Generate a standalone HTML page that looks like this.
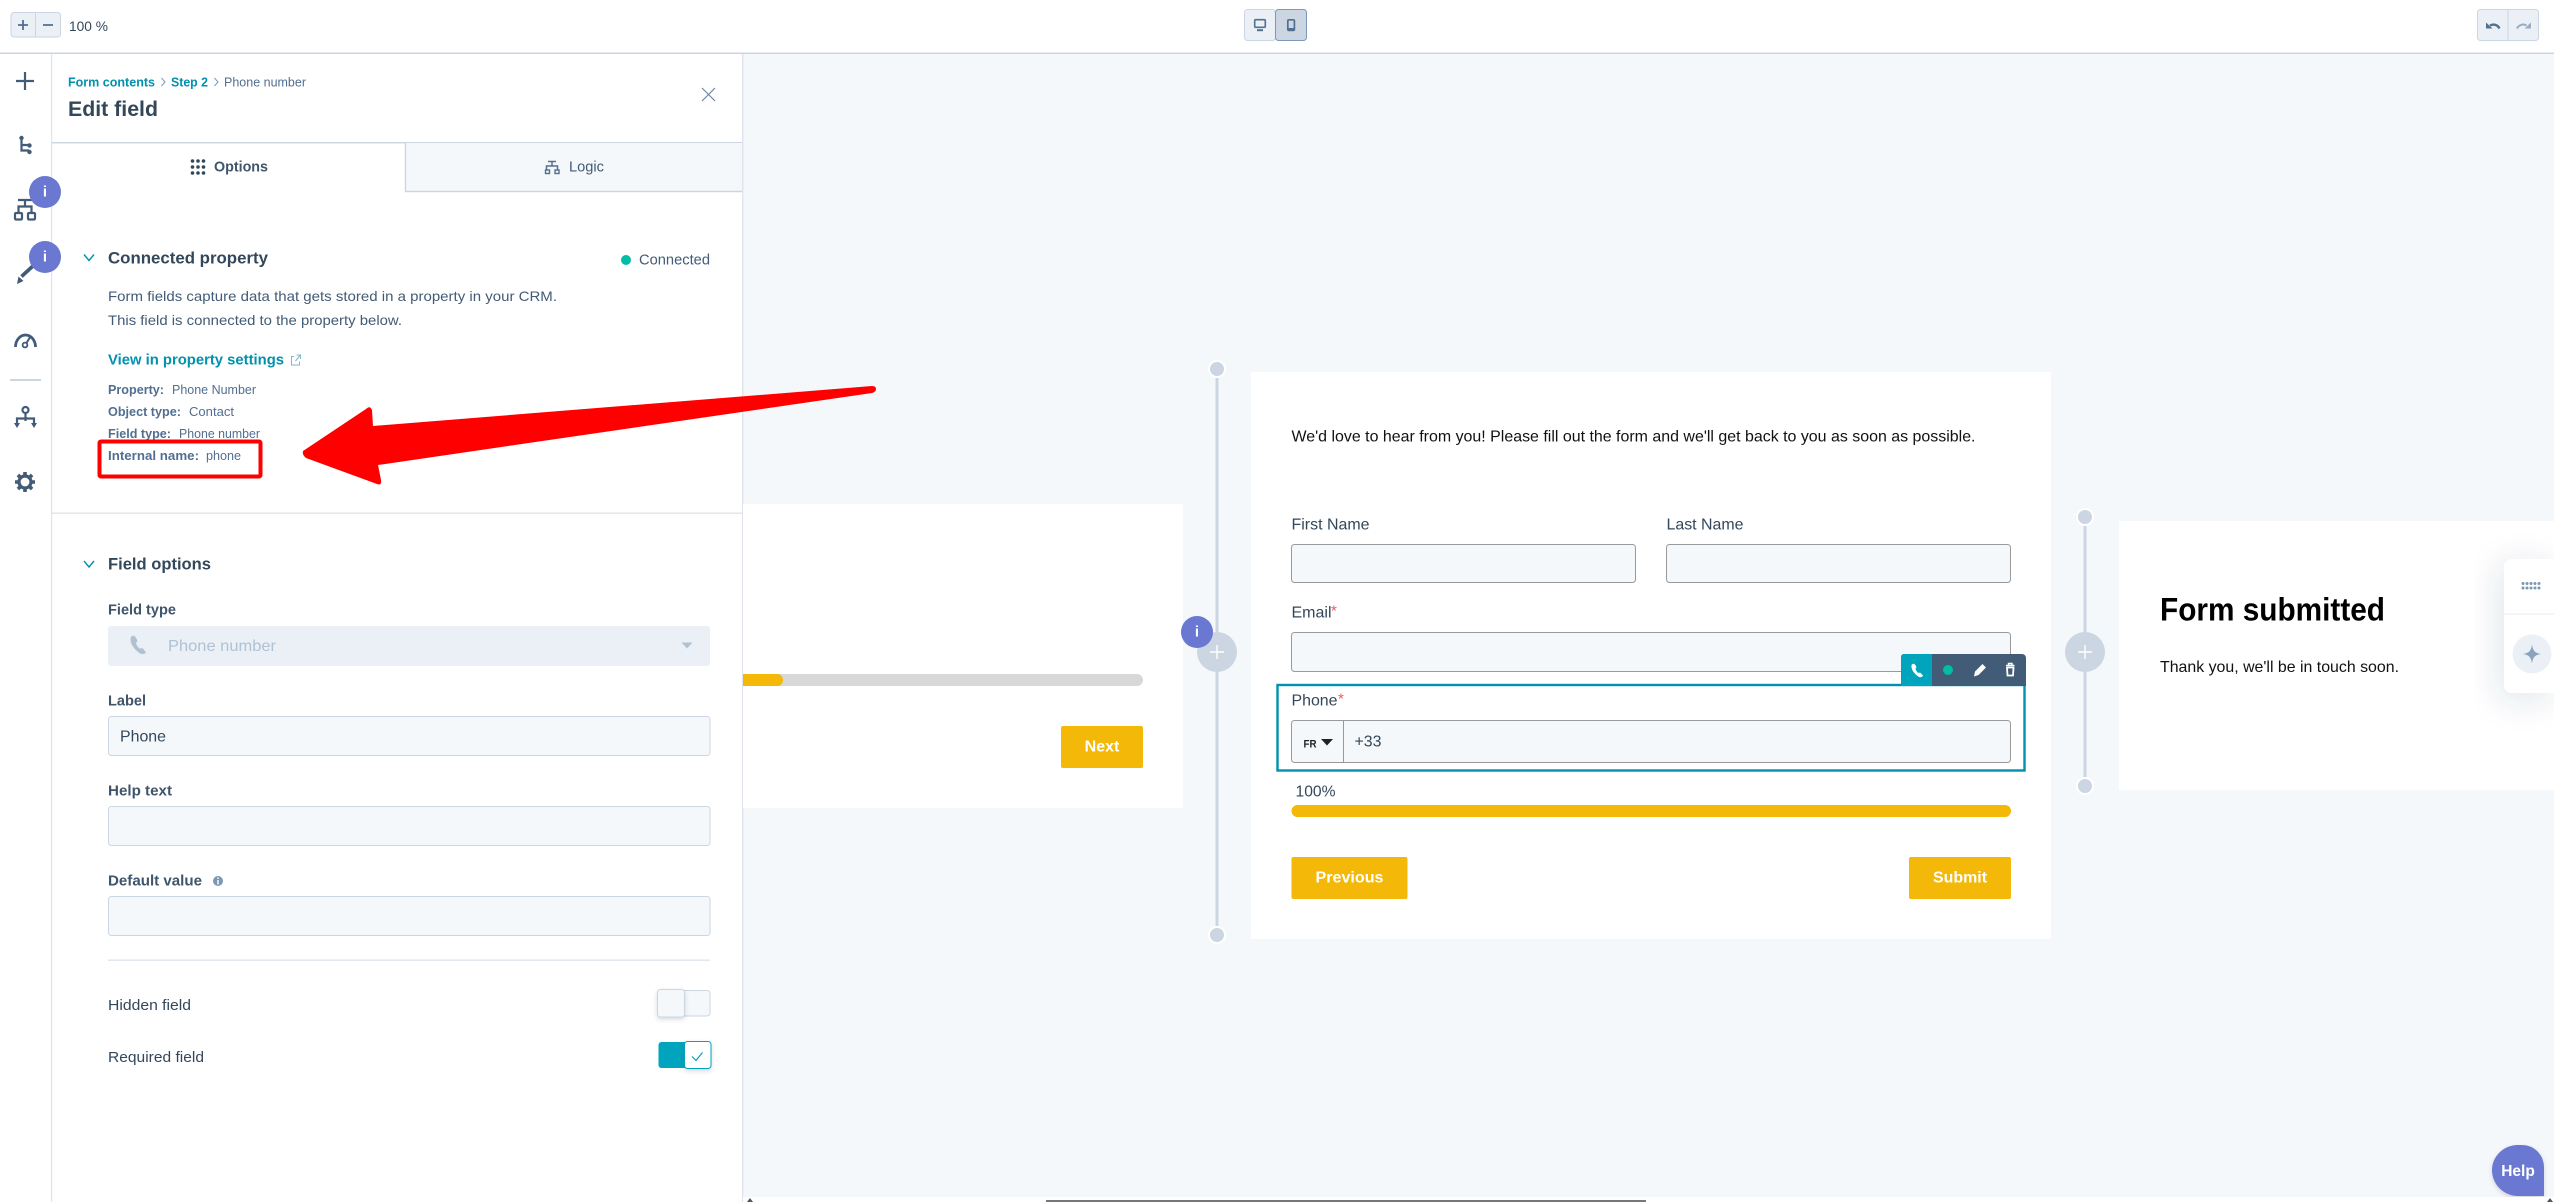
<!DOCTYPE html>
<html><head><meta charset="utf-8"><title>Edit field</title>
<style>
html,body{margin:0;padding:0;background:#fff;width:2554px;height:1202px;overflow:hidden}
svg{display:block}
text{font-family:"Liberation Sans",Arial,sans-serif;dominant-baseline:central;transform:translateY(1.2px)}
.d{fill:#33475b}
.l{fill:#3f556c}
.b{font-weight:700}
.g{fill:#516f90}
.t{fill:#0091ae}
.f{fill:#222;font-size:16px}
.inp{fill:#f5f8fa;stroke:#cbd6e2;stroke-width:1}
.fi{fill:#f5f8fa;stroke:#999;stroke-width:1}
.ic{fill:none;stroke:#425b76;stroke-width:2.2}
</style></head><body>
<svg width="2554" height="1202" viewBox="0 0 2554 1202" xmlns="http://www.w3.org/2000/svg">
<defs>
<filter id="s1" x="-60%" y="-40%" width="200%" height="180%"><feDropShadow dx="-4" dy="6" stdDeviation="16" flood-color="#33475b" flood-opacity=".14"/></filter>
<filter id="s2" x="-40%" y="-40%" width="180%" height="200%"><feDropShadow dx="0" dy="2" stdDeviation="2" flood-color="#33475b" flood-opacity=".2"/></filter>
</defs>
<rect width="2554" height="1202" fill="#fff"/>
<!-- canvas -->
<rect x="743" y="54" width="1811" height="1143" fill="#f5f8fa"/>
<!-- top toolbar -->
<rect x="0" y="52.5" width="2554" height="1.5" fill="#cbd6e2"/>
<rect x="11" y="12.5" width="49.5" height="24.5" rx="3" fill="#eaf0f6" stroke="#cbd6e2" stroke-width="1"/>
<path d="M35.5 13V37" stroke="#cbd6e2"/>
<path d="M18 25H28M23 20V30M43 25H53" stroke="#516f90" stroke-width="1.8" fill="none"/>
<text x="69" y="25" font-size="14" fill="#33475b" textLength="39" lengthAdjust="spacingAndGlyphs">100 %</text>
<rect x="1244.5" y="9.5" width="31" height="31" rx="3" fill="#eaf0f6" stroke="#cbd6e2"/>
<rect x="1275.5" y="9.5" width="31" height="31" rx="3" fill="#cbd6e2" stroke="#7c98b6"/>
<rect x="1254.7" y="19.7" width="10.6" height="7.6" rx="1" fill="#eaf0f6" stroke="#516f90" stroke-width="1.6"/>
<path d="M1257 30.2H1263" stroke="#516f90" stroke-width="2"/>
<rect x="1287.8" y="19.8" width="6.6" height="10.6" rx="1.2" fill="#cbd6e2" stroke="#516f90" stroke-width="1.7"/>
<path d="M1288 28.8H1294" stroke="#516f90" stroke-width="1.6"/>
<rect x="2477.5" y="9.5" width="61" height="31" rx="3" fill="#eaf0f6" stroke="#cbd6e2"/>
<path d="M2508 10V40" stroke="#cbd6e2"/>
<path d="M2499.5 28.5C2497.5 24.5 2493 23.6 2490 25.6" fill="none" stroke="#516f90" stroke-width="2.4"/>
<path d="M2486 22.5V28.5H2492.5Z" fill="#516f90"/>
<path d="M2517 28.5C2519 24.5 2523.5 23.6 2526.5 25.6" fill="none" stroke="#99acc2" stroke-width="2"/>
<path d="M2531 22.5V28.5H2524.5Z" fill="#99acc2"/>

<!-- rail -->
<rect x="51" y="54" width="1.2" height="1148" fill="#dfe3eb"/>
<path d="M25 72V90M16 81H34" stroke="#425b76" stroke-width="2.2" fill="none"/>
<path d="M21.5 138V150.5H29M21.5 145H29" class="ic" stroke-width="1.8"/>
<circle cx="21.5" cy="138" r="2.2" fill="#425b76"/><circle cx="29.5" cy="145.5" r="2.2" fill="#425b76"/><circle cx="29.5" cy="152" r="2.2" fill="#425b76"/>
<path d="M18 200H32M25 200V206M18.5 213V206.5H31.5V213" class="ic"/>
<rect x="15" y="213" width="7" height="6.5" rx="1" class="ic"/><rect x="28" y="213" width="7" height="6.5" rx="1" class="ic"/>
<path d="M21.5 276.5L34 265" stroke="#425b76" stroke-width="3.6"/>
<path d="M17 284L18.5 276.5L23.5 281Z" fill="#425b76"/>
<path d="M15.5 347A10 12 0 0 1 35.5 347" fill="none" stroke="#425b76" stroke-width="2.8"/>
<circle cx="25" cy="345" r="2.4" fill="none" stroke="#425b76" stroke-width="1.8"/><path d="M26.5 343L31 335.5" stroke="#425b76" stroke-width="2"/>
<rect x="10" y="379" width="31" height="2" fill="#cbd6e2"/>
<circle cx="25.5" cy="410" r="3" class="ic" stroke-width="2"/>
<path d="M25.5 413V418M17 425V418.5H34V425M25.5 418V421" class="ic" stroke-width="2"/>
<path d="M14 423H20L17 428ZM31 423H37L34 428Z" fill="#425b76"/>
<g transform="translate(25 482)"><circle r="6" fill="none" stroke="#425b76" stroke-width="3.2"/>
<path d="M-1.8 -10H1.8V-6H-1.8ZM-1.8 6H1.8V10H-1.8ZM-10 -1.8H-6V1.8H-10ZM6 -1.8H10V1.8H6Z" fill="#425b76"/>
<path d="M-1.8 -10H1.8V-6H-1.8ZM-1.8 6H1.8V10H-1.8ZM-10 -1.8H-6V1.8H-10ZM6 -1.8H10V1.8H6Z" fill="#425b76" transform="rotate(45)"/></g>
<circle cx="45" cy="192" r="16" fill="#6a78d1"/><text x="45" y="191" font-size="15" font-weight="700" fill="#fff" text-anchor="middle">i</text>
<circle cx="45" cy="257" r="16" fill="#6a78d1"/><text x="45" y="256" font-size="15" font-weight="700" fill="#fff" text-anchor="middle">i</text>

<!-- panel -->
<rect x="742" y="54" width="1.4" height="1148" fill="#dfe3eb"/>
<text x="68" y="81" font-size="13" class="t b" textLength="87" lengthAdjust="spacingAndGlyphs">Form contents</text>
<path d="M161.5 78L165 82L161.5 86" fill="none" stroke="#7c98b6" stroke-width="1"/>
<text x="171" y="81" font-size="13" class="t b" textLength="37" lengthAdjust="spacingAndGlyphs">Step 2</text>
<path d="M214.5 78L218 82L214.5 86" fill="none" stroke="#7c98b6" stroke-width="1"/>
<text x="224" y="81" font-size="13" class="g" textLength="82" lengthAdjust="spacingAndGlyphs">Phone number</text>
<text x="68" y="108.5" font-size="21" class="d b" textLength="90" lengthAdjust="spacingAndGlyphs">Edit field</text>
<path d="M702 88L715 101M715 88L702 101" stroke="#6b86a5" stroke-width="1.2" fill="none"/>
<rect x="52" y="142" width="690" height="1.4" fill="#cbd6e2"/>
<rect x="405.5" y="143" width="336.5" height="48.5" fill="#f5f8fa"/>
<path d="M405.5 143V191.5H742" fill="none" stroke="#cbd6e2" stroke-width="1.4"/>
<g fill="#33475b"><circle cx="192.5" cy="161" r="1.8"/><circle cx="198" cy="161" r="1.8"/><circle cx="203.5" cy="161" r="1.8"/><circle cx="192.5" cy="167" r="1.8"/><circle cx="198" cy="167" r="1.8"/><circle cx="203.5" cy="167" r="1.8"/><circle cx="192.5" cy="173" r="1.8"/><circle cx="198" cy="173" r="1.8"/><circle cx="203.5" cy="173" r="1.8"/></g>
<text x="214" y="166" font-size="15" class="l" font-weight="700" textLength="54" lengthAdjust="spacingAndGlyphs">Options</text>
<path d="M548 161.5H556M552 161.5V166M546.5 170V166H557.5V170" fill="none" stroke="#516f90" stroke-width="1.5"/>
<rect x="545.5" y="170" width="4" height="3.5" fill="none" stroke="#516f90" stroke-width="1.4"/><rect x="555" y="170" width="4" height="3.5" fill="none" stroke="#516f90" stroke-width="1.4"/>
<text x="569" y="166" font-size="15" fill="#425b76" textLength="35" lengthAdjust="spacingAndGlyphs">Logic</text>

<path d="M84 254.5L89 260.5L94 254.5" fill="none" stroke="#0091ae" stroke-width="1.4"/>
<text x="108" y="257.5" font-size="16.5" class="d b" textLength="160" lengthAdjust="spacingAndGlyphs">Connected property</text>
<circle cx="626" cy="260" r="5" fill="#00bda5"/>
<text x="639" y="259.5" font-size="14.5" fill="#425b76" textLength="71" lengthAdjust="spacingAndGlyphs">Connected</text>
<text x="108" y="295" font-size="14" fill="#425b76" textLength="449" lengthAdjust="spacingAndGlyphs">Form fields capture data that gets stored in a property in your CRM.</text>
<text x="108" y="319" font-size="14" fill="#425b76" textLength="294" lengthAdjust="spacingAndGlyphs">This field is connected to the property below.</text>
<text x="108" y="359" font-size="15" class="t b" textLength="176" lengthAdjust="spacingAndGlyphs">View in property settings</text>
<path d="M294 356.5H291.5V365H299.5V361.5M295.5 361L300 355.5M296.5 355H300.5V359" fill="none" stroke="#7cb9c9" stroke-width="1"/>
<text x="108" y="389" font-size="12.5" fill="#516f90" font-weight="700" textLength="56" lengthAdjust="spacingAndGlyphs">Property:</text>
<text x="172" y="389" font-size="12.5" class="g" textLength="84" lengthAdjust="spacingAndGlyphs">Phone Number</text>
<text x="108" y="411" font-size="12.5" fill="#516f90" font-weight="700" textLength="73" lengthAdjust="spacingAndGlyphs">Object type:</text>
<text x="189" y="411" font-size="12.5" class="g" textLength="45" lengthAdjust="spacingAndGlyphs">Contact</text>
<text x="108" y="433" font-size="12.5" fill="#516f90" font-weight="700" textLength="63" lengthAdjust="spacingAndGlyphs">Field type:</text>
<text x="179" y="433" font-size="12.5" class="g" textLength="81" lengthAdjust="spacingAndGlyphs">Phone number</text>
<text x="108" y="455" font-size="12.5" fill="#516f90" font-weight="700" textLength="91" lengthAdjust="spacingAndGlyphs">Internal name:</text>
<text x="206" y="455" font-size="12.5" class="g" textLength="35" lengthAdjust="spacingAndGlyphs">phone</text>

<rect x="52" y="512.5" width="690" height="1.4" fill="#dfe3eb"/>
<path d="M84 561L89 567L94 561" fill="none" stroke="#0091ae" stroke-width="1.4"/>
<text x="108" y="563.5" font-size="16.5" class="d b" textLength="103" lengthAdjust="spacingAndGlyphs">Field options</text>
<text x="108" y="609.5" font-size="14.5" class="l" font-weight="700" textLength="68" lengthAdjust="spacingAndGlyphs">Field type</text>
<rect x="108" y="626" width="602" height="40" rx="3" fill="#eaf0f6"/>
<path d="M131 637C129.5 640 131 647 140 653.5C142 654.5 145 654 146 652.5L142.5 648C141.5 648.5 140 649 139 648C137 646 136 644 136 642.5C137.5 642 137.5 641 137 639.5L135 636.5C134 635.5 132 635.5 131 637Z" fill="#b0c1d4"/>
<text x="168" y="645.5" font-size="16" fill="#b0c1d4" textLength="108" lengthAdjust="spacingAndGlyphs">Phone number</text>
<path d="M681.5 642.5H692.5L687 648.5Z" fill="#b0c1d4"/>
<text x="108" y="700.5" font-size="14.5" class="l" font-weight="700" textLength="38" lengthAdjust="spacingAndGlyphs">Label</text>
<rect class="inp" x="108.5" y="716.5" width="601.5" height="39" rx="3"/>
<text x="120" y="736" font-size="16" class="d" textLength="46" lengthAdjust="spacingAndGlyphs">Phone</text>
<text x="108" y="790.5" font-size="14.5" class="l" font-weight="700" textLength="64" lengthAdjust="spacingAndGlyphs">Help text</text>
<rect class="inp" x="108.5" y="806.5" width="601.5" height="39" rx="3"/>
<text x="108" y="880.5" font-size="14.5" class="l" font-weight="700" textLength="94" lengthAdjust="spacingAndGlyphs">Default value</text>
<circle cx="218" cy="881" r="5" fill="#7c98b6"/><path d="M218 880V884.5M218 877.5V879" stroke="#fff" stroke-width="1.4"/>
<rect class="inp" x="108.5" y="896.5" width="601.5" height="39" rx="3"/>
<rect x="108" y="959.5" width="602" height="1.4" fill="#dfe3eb"/>
<text x="108" y="1004.5" font-size="15" class="d" textLength="83" lengthAdjust="spacingAndGlyphs">Hidden field</text>
<rect x="658.5" y="990.5" width="51.5" height="25.5" rx="3" fill="#f5f8fa" stroke="#cbd6e2"/>
<rect x="657.5" y="989.5" width="27" height="27.5" rx="3" fill="#f5f8fa" stroke="#cbd6e2" filter="url(#s2)"/>
<text x="108" y="1056.5" font-size="15" class="d" textLength="96" lengthAdjust="spacingAndGlyphs">Required field</text>
<rect x="658.5" y="1042" width="30" height="26" rx="3" fill="#00a4bd"/>
<rect x="684.5" y="1041.5" width="26.5" height="27" rx="3" fill="#fff" stroke="#00a4bd" filter="url(#s2)"/>
<path d="M692 1056.5L696 1060.5L702.5 1052.5" fill="none" stroke="#00a4bd" stroke-width="1.2"/>

<!-- left card -->
<rect x="743" y="504" width="440" height="304" fill="#fff"/>
<rect x="743" y="674" width="400" height="12" rx="6" fill="#d8d8d8"/>
<path d="M743 674H777A6 6 0 0 1 777 686H743Z" fill="#f4b808"/>
<rect x="1061" y="726" width="82" height="42" rx="2" fill="#f4b808"/>
<text x="1102" y="746" font-size="16" font-weight="700" fill="#fff" text-anchor="middle">Next</text>

<!-- timeline 1 -->
<rect x="1215.5" y="369" width="3" height="566" fill="#cbd6e2"/>
<circle cx="1217" cy="369" r="8" fill="#cbd6e2" stroke="#fff" stroke-width="2"/>
<circle cx="1217" cy="935" r="8" fill="#cbd6e2" stroke="#fff" stroke-width="2"/>
<circle cx="1217" cy="652" r="20" fill="#cbd6e2"/>
<path d="M1210 652H1224M1217 645V659" stroke="#fff" stroke-width="1.4"/>
<circle cx="1197" cy="632" r="16" fill="#6a78d1"/><text x="1197" y="631" font-size="15" font-weight="700" fill="#fff" text-anchor="middle">i</text>

<!-- main form card -->
<rect x="1251" y="372" width="800" height="567" fill="#fff"/>
<text x="1291.5" y="436" class="f" style="fill:#111" textLength="684" lengthAdjust="spacingAndGlyphs">We'd love to hear from you! Please fill out the form and we'll get back to you as soon as possible.</text>
<text x="1291.5" y="524" class="f" style="fill:#33475b" textLength="78" lengthAdjust="spacingAndGlyphs">First Name</text>
<rect class="fi" x="1291.5" y="544.5" width="344" height="38" rx="3"/>
<text x="1666.5" y="524" class="f" style="fill:#33475b" textLength="77" lengthAdjust="spacingAndGlyphs">Last Name</text>
<rect class="fi" x="1666.5" y="544.5" width="344" height="38" rx="3"/>
<text x="1291.5" y="612" class="f" style="fill:#33475b" textLength="40" lengthAdjust="spacingAndGlyphs">Email</text>
<text x="1331" y="610" font-size="15" fill="#f2545b">*</text>
<rect class="fi" x="1291.5" y="632.5" width="719" height="39" rx="3"/>

<rect x="1277.5" y="685" width="747" height="85.5" fill="#fff" stroke="#0091ae" stroke-width="2.4"/>
<text x="1291.5" y="700" class="f" style="fill:#33475b" textLength="46" lengthAdjust="spacingAndGlyphs">Phone</text>
<text x="1338" y="698" font-size="15" fill="#f2545b">*</text>
<rect class="fi" x="1291.5" y="720.5" width="719" height="42" rx="3"/>
<path d="M1343.5 721V762" stroke="#999" stroke-width="1"/>
<text x="1303.5" y="743.5" font-size="11" font-weight="700" fill="#222" textLength="13" lengthAdjust="spacingAndGlyphs">FR</text>
<path d="M1321 739H1333L1327 745.5Z" fill="#222"/>
<text x="1354.5" y="741" class="f" style="fill:#33475b" textLength="27" lengthAdjust="spacingAndGlyphs">+33</text>

<!-- field toolbar -->
<path d="M1904 654H2022A4 4 0 0 1 2026 658V686H1901V657A3 3 0 0 1 1904 654Z" fill="#425b76"/>
<path d="M1904 654H1932V686H1901V657A3 3 0 0 1 1904 654Z" fill="#00a4bd"/>
<path d="M1911.5 665C1911 668.5 1913 673 1919 677C1920.5 677.5 1922.5 677 1923 675.5L1920 672.5C1919 673 1918 673 1917.5 672.5C1916.5 671 1915.5 669.5 1915.5 668.5C1916.5 668 1916.5 667 1916 666L1914.5 664C1913.5 663.5 1912 664 1911.5 665Z" fill="#fff"/>
<circle cx="1948" cy="670" r="5" fill="#00bda5"/>
<path d="M1974 676.5L1975 671.5L1982.5 664L1986 667.5L1978.5 675Z" fill="#fff"/>
<path d="M2006 665.5H2014.5M2008.5 665V663.5H2012V665" stroke="#fff" stroke-width="1.4" fill="none"/>
<path d="M2007 667.5H2013.5L2013 675.5H2007.5Z" fill="none" stroke="#fff" stroke-width="1.8"/>

<text x="1295.5" y="791" class="f" style="fill:#33475b" textLength="40" lengthAdjust="spacingAndGlyphs">100%</text>
<rect x="1291.5" y="805" width="719.5" height="12" rx="6" fill="#f4b808"/>
<rect x="1291.5" y="857" width="116" height="42" rx="2" fill="#f4b808"/>
<text x="1349.5" y="877" font-size="16" font-weight="700" fill="#fff" text-anchor="middle" textLength="68" lengthAdjust="spacingAndGlyphs">Previous</text>
<rect x="1909" y="857" width="102" height="42" rx="2" fill="#f4b808"/>
<text x="1960" y="877" font-size="16" font-weight="700" fill="#fff" text-anchor="middle" textLength="54" lengthAdjust="spacingAndGlyphs">Submit</text>

<!-- timeline 2 -->
<rect x="2083.5" y="517" width="3" height="269" fill="#cbd6e2"/>
<circle cx="2085" cy="517" r="8" fill="#cbd6e2" stroke="#fff" stroke-width="2"/>
<circle cx="2085" cy="786" r="8" fill="#cbd6e2" stroke="#fff" stroke-width="2"/>
<circle cx="2085" cy="652" r="20" fill="#cbd6e2"/>
<path d="M2078 652H2092M2085 645V659" stroke="#fff" stroke-width="1.4"/>

<!-- submitted card -->
<rect x="2119" y="521" width="435" height="269" fill="#fff"/>
<text x="2160" y="608.5" font-size="32" font-weight="700" fill="#000" textLength="225" lengthAdjust="spacingAndGlyphs">Form submitted</text>
<text x="2160" y="666.5" font-size="16" fill="#111" textLength="239" lengthAdjust="spacingAndGlyphs">Thank you, we'll be in touch soon.</text>

<!-- palette -->
<path d="M2554 559H2512A8 8 0 0 0 2504 567V685A8 8 0 0 0 2512 693H2554Z" fill="#fff" filter="url(#s1)"/>
<rect x="2504" y="613.5" width="50" height="1.2" fill="#eaf0f6"/>
<g fill="#7c98b6"><circle cx="2523" cy="583.5" r="1.5"/><circle cx="2527" cy="583.5" r="1.5"/><circle cx="2531" cy="583.5" r="1.5"/><circle cx="2535" cy="583.5" r="1.5"/><circle cx="2539" cy="583.5" r="1.5"/><circle cx="2523" cy="588" r="1.5"/><circle cx="2527" cy="588" r="1.5"/><circle cx="2531" cy="588" r="1.5"/><circle cx="2535" cy="588" r="1.5"/><circle cx="2539" cy="588" r="1.5"/></g>
<circle cx="2532" cy="654" r="19.5" fill="#eaf0f6"/>
<path d="M2532 644.5C2533 651 2535 653 2541 654C2535 655 2533 657 2532 663.5C2531 657 2529 655 2523 654C2529 653 2531 651 2532 644.5Z" fill="#8ba3bf"/>

<!-- help -->
<path d="M2518 1145H2522A22 22 0 0 1 2544 1167V1196H2518A26 26 0 0 1 2492 1170A26 25 0 0 1 2518 1145Z" fill="#6a78d1" filter="url(#s2)"/>
<text x="2518" y="1170.5" font-size="15.5" font-weight="700" fill="#fff" text-anchor="middle">Help</text>

<!-- bottom strip -->
<rect x="743" y="1197" width="1811" height="5" fill="#fff"/>
<rect x="1046" y="1200" width="600" height="2" fill="#777"/>
<path d="M747 1202L750 1198L753 1202Z" fill="#555"/>
<path d="M2547 1202L2550 1198L2553 1202Z" fill="#555"/>

<!-- annotation -->
<rect x="99.5" y="441.5" width="161" height="35" rx="1.5" fill="none" stroke="#ff0000" stroke-width="4"/>
<path d="M303 451Q302 455 306 458L377 484Q382 486 381 480L378 465L872 393Q876 392 876 389Q876 386 872 386L373 426L372 410Q370 405 366 409Z" fill="#ff0000"/>
</svg>
</body></html>
